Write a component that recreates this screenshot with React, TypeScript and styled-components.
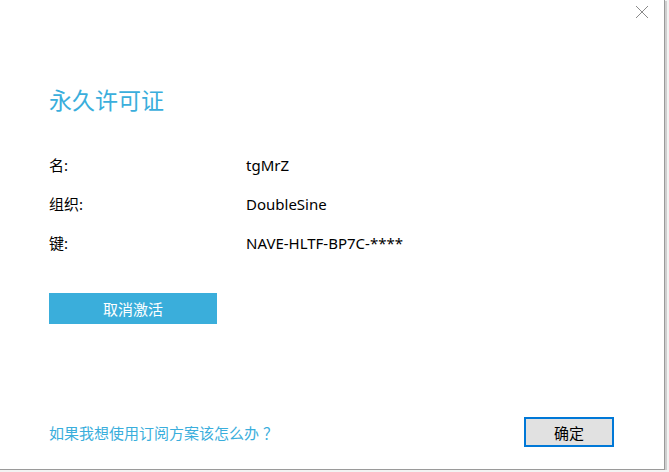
import React from 'react'
import styled, { createGlobalStyle } from 'styled-components'

const GlobalStyle = createGlobalStyle`
  html, body {
    margin: 0;
    padding: 0;
    background: #f3f3f3;
  }
  body {
    font-family: "Noto Sans", "Noto Sans CJK SC", sans-serif;
  }
`

const Window = styled.div`
  position: relative;
  box-sizing: border-box;
  width: 665px;
  height: 470px;
  background: #fff;
  border-right: 1px solid #9a9a9a;
  border-bottom: 1px solid #9a9a9a;
  box-shadow: 2px 1px 0 #cfcfcf;
  display: flex;
  flex-direction: column;
  padding: 80px 50px 22px 49px;
`

const CloseButton = styled.button`
  position: absolute;
  top: 4px;
  right: 14px;
  width: 16px;
  height: 16px;
  padding: 0;
  border: 0;
  background: transparent;
  display: flex;
  align-items: center;
  justify-content: center;
`

const Title = styled.h1`
  margin: 0;
  font-size: 23px;
  font-weight: 400;
  line-height: 38px;
  color: #3aaedc;
  font-family: "Noto Sans CJK SC", sans-serif;
`

const InfoGrid = styled.dl`
  margin: 37px 0 0;
  display: grid;
  grid-template-columns: 197px 1fr;
  row-gap: 19px;
  font-size: 15px;
  line-height: 20px;
  color: #000;
`

const Label = styled.dt`
  margin: 0;
`

const Value = styled.dd`
  margin: 0;
`

const DeactivateButton = styled.button`
  margin-top: 40px;
  width: 168px;
  height: 31px;
  border: 0;
  background: #3aaedb;
  color: #fff;
  font-family: "Noto Sans CJK SC", sans-serif;
  font-size: 15px;
  padding: 0;
`

const Footer = styled.div`
  margin-top: auto;
  display: flex;
  align-items: center;
  justify-content: space-between;
`

const HelpLink = styled.a`
  color: #3aaedc;
  font-size: 15px;
  text-decoration: none;
  font-family: "Noto Sans CJK SC", sans-serif;
`

const Mark = styled.span`
  margin-left: 4px;
`

const OkButton = styled.button`
  box-sizing: border-box;
  width: 90px;
  height: 30px;
  background: #e1e1e1;
  border: 2px solid #0078d7;
  color: #000;
  font-family: "Noto Sans CJK SC", sans-serif;
  font-size: 15px;
  padding: 0;
`

const rows = [
  { label: '名:', value: 'tgMrZ' },
  { label: '组织:', value: 'DoubleSine' },
  { label: '键:', value: 'NAVE-HLTF-BP7C-****' },
]

export default function App() {
  return (
    <>
      <GlobalStyle />
      <Window>
        <CloseButton aria-label="关闭">
          <svg width="14" height="14" viewBox="0 0 14 14">
            <path d="M1 1 L13 13 M13 1 L1 13" stroke="#8a8a8a" strokeWidth="1" fill="none" />
          </svg>
        </CloseButton>
        <Title>永久许可证</Title>
        <InfoGrid>
          {rows.map((r) => (
            <React.Fragment key={r.label}>
              <Label>{r.label}</Label>
              <Value>{r.value}</Value>
            </React.Fragment>
          ))}
        </InfoGrid>
        <div>
          <DeactivateButton>取消激活</DeactivateButton>
        </div>
        <Footer>
          <HelpLink href="#">
            如果我想使用订阅方案该怎么办<Mark>？</Mark>
          </HelpLink>
          <OkButton>确定</OkButton>
        </Footer>
      </Window>
    </>
  )
}
